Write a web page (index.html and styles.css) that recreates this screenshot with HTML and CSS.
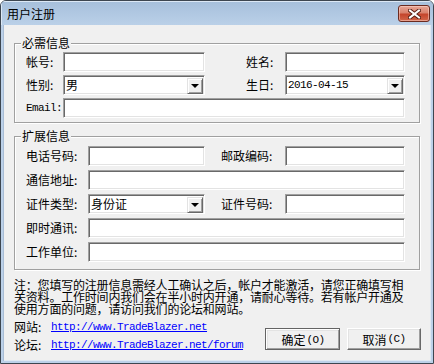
FILE: index.html
```html
<!DOCTYPE html>
<html lang="zh-CN">
<head>
  <meta charset="UTF-8">
  <title>用户注册</title>
  <link rel="stylesheet" href="styles.css">
</head>
<body>
  <div class="window">
    <div class="titlebar">
      <span class="title">用户注册</span>
      <button class="close" type="button">
        <svg width="13" height="10" viewBox="0 0 13 10">
          <path d="M2 1.5 L11 8.5 M11 1.5 L2 8.5" stroke="#5a2014" stroke-width="4" stroke-linecap="square"/>
          <path d="M2 1.5 L11 8.5 M11 1.5 L2 8.5" stroke="#fff" stroke-width="2" stroke-linecap="square"/>
        </svg>
      </button>
    </div>
    <div class="frame">
      <div class="client">
        <fieldset class="group">
          <legend>必需信息</legend>
          <div class="grid grid-req">
            <label>帐号:</label><span class="edit"></span>
            <label class="right-req">姓名:</label><span class="edit"></span>

            <label>性别:</label>
            <span class="combo"><span class="combo-text">男</span><span class="drop"></span></span>
            <label class="right-req">生日:</label>
            <span class="combo"><span class="combo-text mono">2016-04-15</span><span class="drop"></span></span>

            <label class="mono">Email:</label><span class="edit span-all"></span>
          </div>
        </fieldset>

        <fieldset class="group group-ext">
          <legend>扩展信息</legend>
          <div class="grid grid-ext">
            <label>电话号码:</label><span class="edit"></span>
            <label class="right-ext">邮政编码:</label><span class="edit"></span>

            <label>通信地址:</label><span class="edit span-all"></span>

            <label>证件类型:</label>
            <span class="combo"><span class="combo-text">身份证</span><span class="drop"></span></span>
            <label class="right-ext">证件号码:</label><span class="edit"></span>

            <label>即时通讯:</label><span class="edit span-all"></span>

            <label>工作单位:</label><span class="edit span-all"></span>
          </div>
        </fieldset>

        <p class="note">注：您填写的注册信息需经人工确认之后，帐户才能激活，请您正确填写相<br>关资料。工作时间内我们会在半小时内开通，请耐心等待。若有帐户开通及<br>使用方面的问题，请访问我们的论坛和网站。</p>

        <div class="footer">
          <div class="links">
            <div class="link-row"><span class="link-label">网站:</span><a href="#">http://www.TradeBlazer.net</a></div>
            <div class="link-row"><span class="link-label">论坛:</span><a href="#">http://www.TradeBlazer.net/forum</a></div>
          </div>
          <div class="buttons">
            <button class="btn btn-default" type="button">确定<span class="mono">(O)</span></button>
            <button class="btn" type="button">取消<span class="mono">(C)</span></button>
          </div>
        </div>
      </div>
    </div>
  </div>
</body>
</html>
```

FILE: styles.css
```css
body {
  margin: 0;
  font-family: "Noto Sans CJK SC", "Liberation Sans", sans-serif;
  font-size: 12px;
  color: #000;
  background: #fff;
}
.window {
  box-sizing: border-box;
  width: 434px;
  height: 364px;
  border: 1px solid #3d4650;
  border-radius: 6px 6px 0 0;
  background: #bcd1e9;
  display: flex;
  flex-direction: column;
  overflow: hidden;
}
.titlebar {
  height: 24px;
  display: flex;
  align-items: center;
  padding-left: 6px;
  background: linear-gradient(#a6bfdb, #bad0e8);
  box-shadow: inset 1px 1px 0 #dce8f5;
}
.title {
  line-height: 14px;
  margin-top: 1px;
}
.close {
  box-sizing: border-box;
  width: 32px;
  height: 17px;
  margin: 1px 3px 0 auto;
  padding: 0;
  border: 1px solid #6b2b20;
  border-radius: 3px;
  background: linear-gradient(#e8a696 0%, #d9826d 45%, #c4452c 55%, #d2664a 100%);
  box-shadow: inset 0 0 0 1px rgba(255, 220, 210, 0.5);
  display: flex;
  align-items: center;
  justify-content: center;
}
.close svg {
  display: block;
}
.frame {
  flex: 1;
  display: flex;
  padding: 0 2px 2px;
}
.client {
  flex: 1;
  background: #f0f0f0;
  padding: 0 11px;
  box-shadow: inset 1px 0 0 #a9bdd5, inset -1px -1px 0 #dfe8f2;
}
.group {
  margin: 11px 0 0;
  padding: 2px 11px 4px;
  min-width: 0;
  border: 1px solid #a0a0a0;
  box-shadow: inset 1px 1px 0 #fff, 1px 1px 0 #fff;
}
.group legend {
  margin-left: -5px;
  padding: 0 1px;
  line-height: 14px;
  background: #f0f0f0;
}
.group-ext {
  margin-top: 6px;
  padding: 3px 11px 7px;
}
.grid {
  display: grid;
  grid-auto-rows: 20px;
  row-gap: 3px;
  align-items: center;
}
.grid-req {
  grid-template-columns: 37px 142px 80px 120px;
}
.grid-ext {
  row-gap: 4px;
  grid-template-columns: 62px 117px 80px 120px;
}
.grid label {
  line-height: 14px;
  white-space: nowrap;
}
.right-req {
  padding-left: 41px;
}
.right-ext {
  padding-left: 16px;
}
.span-all {
  grid-column: 2 / 5;
}
.mono {
  font-family: "Liberation Mono", "DejaVu Sans Mono", monospace;
  font-size: 11px;
  letter-spacing: -0.6px;
}
.edit,
.combo {
  box-sizing: border-box;
  height: 20px;
  background: #fff;
  border: 1px solid;
  border-color: #a0a0a0 #fff #fff #a0a0a0;
  box-shadow: inset 1px 1px 0 #696969, inset -1px -1px 0 #e3e3e3;
}
.combo {
  display: flex;
  align-items: center;
  padding: 1px;
}
.combo-text {
  flex: 1;
  padding-left: 1px;
  line-height: 14px;
}
.drop {
  box-sizing: border-box;
  width: 16px;
  height: 16px;
  margin-top: 1px;
  background: #f0f0f0;
  border: 1px solid;
  border-color: #e3e3e3 #696969 #696969 #e3e3e3;
  box-shadow: inset 1px 1px 0 #fff, inset -1px -1px 0 #a0a0a0;
  display: flex;
  align-items: center;
  justify-content: center;
}
.drop::after {
  content: "";
  border-left: 4px solid transparent;
  border-right: 4px solid transparent;
  border-top: 4px solid #000;
  margin-top: 1px;
}
.note {
  margin: 10px 0 0;
  font-family: "Liberation Sans", "Noto Sans CJK SC", sans-serif;
  line-height: 12px;
  letter-spacing: -0.2px;
  white-space: nowrap;
}
.footer {
  display: flex;
  justify-content: space-between;
  margin-top: 2px;
}
.link-row {
  height: 18px;
  line-height: 18px;
  display: flex;
}
.link-label {
  width: 37px;
}
.link-row a {
  color: #0000ff;
  font-family: "Liberation Mono", "DejaVu Sans Mono", monospace;
  font-size: 11px;
  letter-spacing: -0.6px;
}
.buttons {
  display: flex;
  gap: 7px;
  margin-top: 10px;
  margin-right: -1px;
}
.btn {
  box-sizing: border-box;
  width: 74px;
  height: 22px;
  padding: 0;
  font-family: "Noto Sans CJK SC", "Liberation Sans", sans-serif;
  font-size: 12px;
  color: #000;
  background: #f0f0f0;
  border: 1px solid;
  border-color: #fff #696969 #696969 #fff;
  box-shadow: inset -1px -1px 0 #a0a0a0, inset 1px 1px 0 #e3e3e3;
  display: flex;
  align-items: center;
  justify-content: center;
  gap: 1px;
}
.btn-default {
  width: 75px;
  outline: 1px solid #646464;
  outline-offset: -1px;
  border-width: 2px 1px 1px 2px;
}
```
